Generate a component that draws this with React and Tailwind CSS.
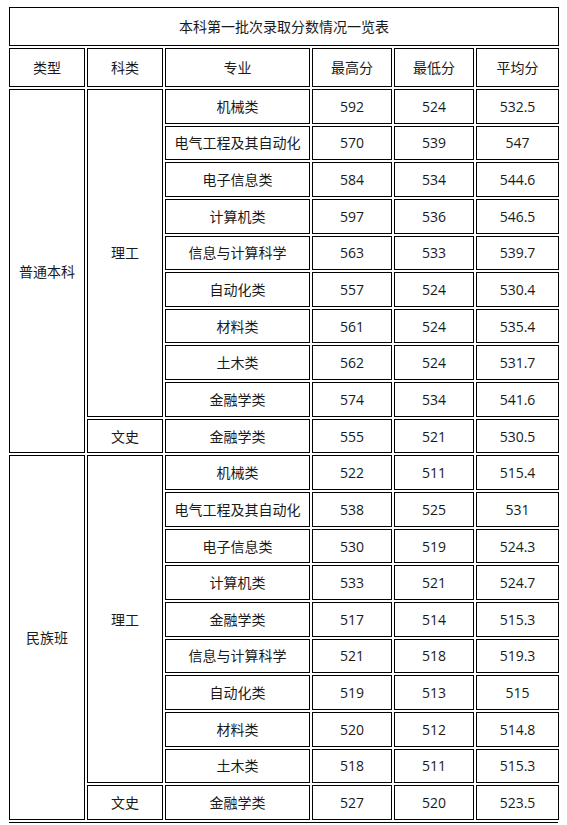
import React from "react";

const sec1 = [
  ["机械类", "592", "524", "532.5"],
  ["电气工程及其自动化", "570", "539", "547"],
  ["电子信息类", "584", "534", "544.6"],
  ["计算机类", "597", "536", "546.5"],
  ["信息与计算科学", "563", "533", "539.7"],
  ["自动化类", "557", "524", "530.4"],
  ["材料类", "561", "524", "535.4"],
  ["土木类", "562", "524", "531.7"],
  ["金融学类", "574", "534", "541.6"],
];
const sec1w = ["金融学类", "555", "521", "530.5"];

const sec2 = [
  ["机械类", "522", "511", "515.4"],
  ["电气工程及其自动化", "538", "525", "531"],
  ["电子信息类", "530", "519", "524.3"],
  ["计算机类", "533", "521", "524.7"],
  ["金融学类", "517", "514", "515.3"],
  ["信息与计算科学", "521", "518", "519.3"],
  ["自动化类", "519", "513", "515"],
  ["材料类", "520", "512", "514.8"],
  ["土木类", "518", "511", "515.3"],
];
const sec2w = ["金融学类", "527", "520", "523.5"];

function Cell({ children, className = "" }) {
  return (
    <div
      className={
        "border border-black flex items-center justify-center text-[14px] text-[#1a1a1a] " +
        className
      }
    >
      {children}
    </div>
  );
}

function Row({ r }) {
  return (
    <>
      {r.map((v, i) => (
        <Cell key={i}>{v}</Cell>
      ))}
    </>
  );
}

export default function App() {
  return (
    <div
      className="w-[567px] h-[825px] bg-white overflow-hidden pt-[7px] pl-[9px]"
      style={{ fontFamily: '"Open Sans", "Noto Sans CJK SC", sans-serif' }}
    >
      <div className="grid grid-cols-[76px_76px_145px_80px_80px_83px] grid-rows-[39px_39px_repeat(20,34.65px)] gap-[2px] w-[549px]">
        <Cell className="col-span-6">本科第一批次录取分数情况一览表</Cell>
        <Cell>类型</Cell>
        <Cell>科类</Cell>
        <Cell>专业</Cell>
        <Cell>最高分</Cell>
        <Cell>最低分</Cell>
        <Cell>平均分</Cell>

        <Cell className="row-span-10">普通本科</Cell>
        <Cell className="row-span-9">理工</Cell>
        {sec1.map((r, i) => (
          <Row key={"a" + i} r={r} />
        ))}
        <Cell>文史</Cell>
        <Row r={sec1w} />

        <Cell className="row-span-10">民族班</Cell>
        <Cell className="row-span-9">理工</Cell>
        {sec2.map((r, i) => (
          <Row key={"b" + i} r={r} />
        ))}
        <Cell>文史</Cell>
        <Row r={sec2w} />
      </div>
      <div className="mt-[2px] h-px w-[549px] bg-black" />
    </div>
  );
}
